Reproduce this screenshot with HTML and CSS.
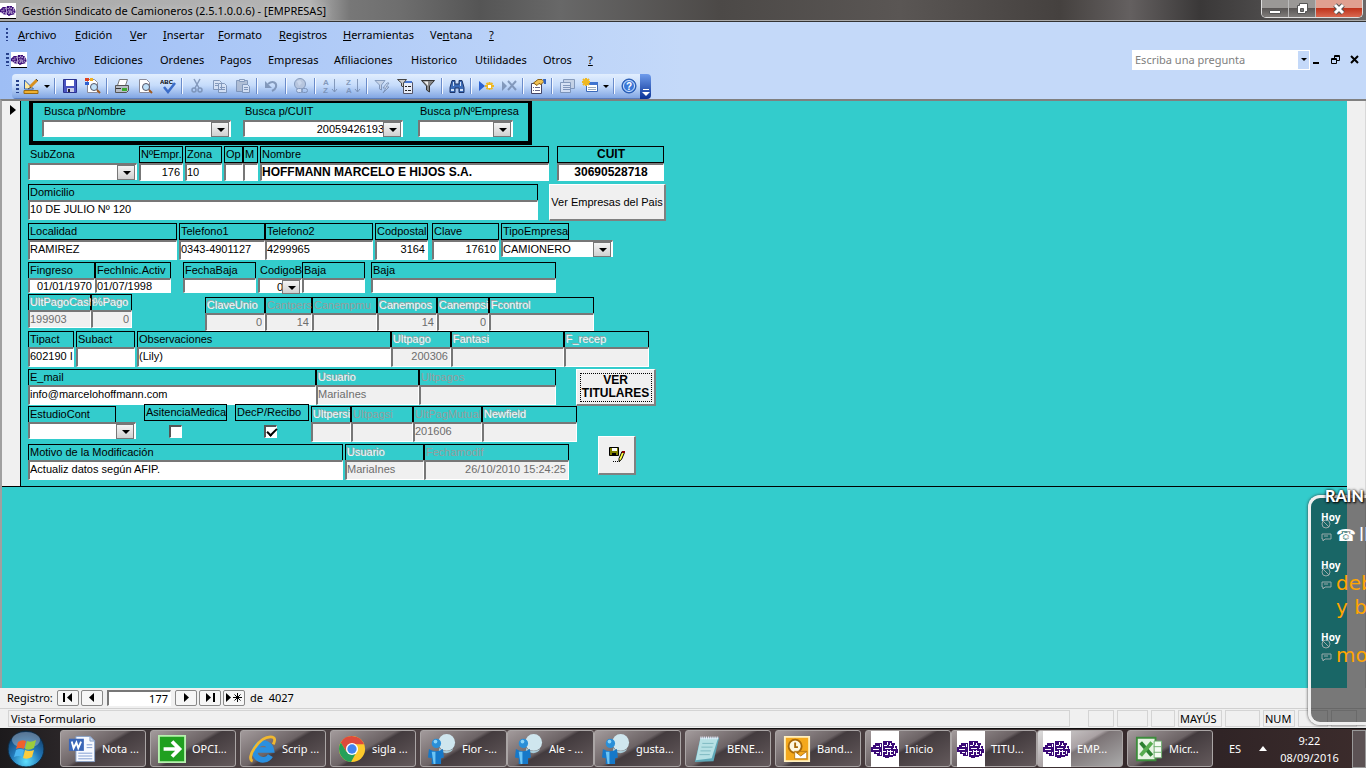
FILE: index.html
```html
<!DOCTYPE html>
<html lang="es">
<head>
<meta charset="utf-8">
<title>Gestión Sindicato de Camioneros</title>
<link rel="stylesheet" href="styles.css">
</head>
<body>
<svg class="defs" aria-hidden="true">
  <symbol id="truck" viewBox="0 0 28 22"><path fill="#3b0a78" d="M4 5h7v13H6v-2H3v-2H0V9h2V7h2zM12 3h9v2h3v3h2v3h1v4h-2v3h-3v1h-4v1h-4v-1h-2z"/><path stroke="#fff" fill="none" d="M5 8.500h3M2 11.500h6M5 14.500h3M9.500 6v3m0 5v3M13 7.500h3m2 0h3M14 10.500h6m2 0h3M12 13.500h3m2 0h5M14 16.500h3m2 0h3M16.500 4v3m0 5v4M19.500 5v2m0 5v4M23.500 7v3m0 3v3"/></symbol>
  <symbol id="person" viewBox="0 0 30 32"><circle cx="20" cy="9" r="9" fill="#cfe6ee"/><path fill="#a9ccd8" d="M12 15c4 4 10 4 15 1-2 4-8 6-12 3l-4 4z"/><circle cx="9" cy="10" r="5" fill="#2a8fd8"/><circle cx="8" cy="8" r="2" fill="#8cd4f8"/><path fill="#1678c8" d="M1 16q8 5 15 0l1 9-3 1v6H4v-6l-4-1z"/><path fill="#6cc4f4" d="M4 19h4v13H6z"/></symbol>
  <symbol id="sheetfind" viewBox="0 0 16 16"><path fill="#fff" stroke="#8a8a98" d="M2.500 1.500h7l3 3v10h-10z"/><circle cx="9" cy="9" r="3.500" fill="#bfe0f8" stroke="#556"/><path stroke="#a05a20" stroke-width="2" d="M12 12l3 3"/></symbol>
</svg>

<header class="titlebar">
  <svg class="app-icon"><use href="#truck"/></svg>
  <h1>Gestión Sindicato de Camioneros (2.5.1.0.0.6) - [EMPRESAS]</h1>
  <div class="win-buttons">
    <button aria-label="Minimizar"><svg width="14" height="12"><path fill="#fff" stroke="#555" d="M1.500 7.500h11v3h-11z"/></svg></button>
    <button aria-label="Restaurar"><svg width="14" height="14"><path fill="#fff" stroke="#555" d="M4.500 1.500h8v8h-2v2h-8v-8h2z"/><path fill="#777" stroke="#555" d="M5.500 6.500h3v3h-3z"/></svg></button>
    <button class="close" aria-label="Cerrar"><svg width="14" height="12"><path stroke="#555" stroke-width="5" d="M3 2l8 8M11 2L3 10"/><path stroke="#fff" stroke-width="3" d="M3 2l8 8M11 2L3 10"/></svg></button>
  </div>
</header>

<div class="bars">
  <nav class="menu menu-main">
    <i class="grip"></i>
    <a href="#"><u>A</u>rchivo</a><a href="#"><u>E</u>dición</a><a href="#"><u>V</u>er</a><a href="#"><u>I</u>nsertar</a><a href="#"><u>F</u>ormato</a><a href="#"><u>R</u>egistros</a><a href="#"><u>H</u>erramientas</a><a href="#">Ve<u>n</u>tana</a><a href="#"><u>?</u></a>
  </nav>
  <div class="menu-row">
    <nav class="menu menu-app">
      <i class="grip"></i>
      <svg class="app-icon"><use href="#truck"/></svg>
      <a href="#">Archivo</a><a href="#">Ediciones</a><a href="#">Ordenes</a><a href="#">Pagos</a><a href="#">Empresas</a><a href="#">Afiliaciones</a><a href="#">Historico</a><a href="#">Utilidades</a><a href="#">Otros</a><a href="#"><u>?</u></a>
    </nav>
    <div class="ask">
      <input type="text" placeholder="Escriba una pregunta" aria-label="Escriba una pregunta">
      <button aria-label="Preguntas anteriores"><i class="caret"></i></button>
    </div>
    <div class="doc-buttons">
      <button aria-label="Minimizar documento"><svg width="10" height="10"><path d="M1 7h6v2H1z"/></svg></button>
      <button aria-label="Restaurar documento"><svg width="10" height="10"><path fill="none" stroke="#000" d="M3.500 3V.500h5v5H6M.500 3.500h5v5h-5zM3 1.500h6M0 4.500h6"/></svg></button>
      <button aria-label="Cerrar documento"><svg width="10" height="10"><path stroke="#000" stroke-width="2" d="M1 1l7 7M8 1L1 8"/></svg></button>
    </div>
  </div>
  <div class="toolbar">
    <div class="tools">
      <i class="grip"></i>
      <button aria-label="Vista Diseño"><svg viewBox="0 0 16 16"><path fill="#ffe9a0" stroke="#2c5fb0" d="M1.500 2v9h9z"/><path fill="#f0b030" stroke="#9a6a10" d="M1 12.500h14v3H1z"/><path stroke="#d89020" stroke-width="3" d="M7 9l7-7"/><path stroke="#444" d="M5 11l3-2M13 1l2 2"/></svg></button>
      <button class="drop" aria-label="Más vistas"><i class="caret"></i></button>
      <i class="sep"></i>
      <button aria-label="Guardar"><svg viewBox="0 0 16 16"><path fill="#4a55c0" stroke="#2b3390" d="M1.500 1.500h13v13h-13z"/><path fill="#fff" d="M4 2h8v6H4z"/><path fill="#c8cce8" d="M5 10h7v4H5z"/><path fill="#223" d="M6 11h2v3H6z"/></svg></button>
      <button aria-label="Buscar archivo"><svg viewBox="0 0 16 16"><use href="#sheetfind"/><path fill="#e04020" d="M0 0h4v3H0z"/><path fill="#f0b020" d="M5 0h3v3H5z"/><path fill="#3060d0" d="M0 4h4v3H0z"/></svg></button>
      <i class="sep"></i>
      <button aria-label="Imprimir"><svg viewBox="0 0 16 16"><path fill="#fff" stroke="#777" d="M5.500 1.500h8l-2 6h-8z"/><path fill="#b8bcc4" stroke="#555" d="M1.500 7.500h13v5l-2 2h-11z"/><path fill="#3aaa30" d="M8 10h5v3H8z"/><path stroke="#333" d="M2 10.500h5"/></svg></button>
      <button aria-label="Vista preliminar"><svg viewBox="0 0 16 16"><use href="#sheetfind"/></svg></button>
      <button aria-label="Ortografía"><svg viewBox="0 0 16 16"><text x="0" y="6" class="abc">ABC</text><path fill="none" stroke="#3a6cc8" stroke-width="2.500" d="M4 9l4 5 7-9"/></svg></button>
      <i class="sep"></i>
      <button class="off" aria-label="Cortar"><svg viewBox="0 0 16 16"><path fill="none" stroke="#7389ad" stroke-width="1.500" d="M5 1l5 9M11 1L6 10"/><circle cx="5" cy="12" r="2" fill="none" stroke="#7389ad" stroke-width="1.500"/><circle cx="11" cy="12" r="2" fill="none" stroke="#7389ad" stroke-width="1.500"/></svg></button>
      <button class="off" aria-label="Copiar"><svg viewBox="0 0 16 16"><path fill="#dbe4f4" stroke="#7389ad" d="M1.500 2.500h6l2 2v7h-8zM6.500 5.500h6l2 2v7h-8zM3 5.500h3M3 7.500h3M8 9.500h5M8 11.500h5"/></svg></button>
      <button class="off" aria-label="Pegar"><svg viewBox="0 0 16 16"><path fill="#a9b6cc" stroke="#7389ad" d="M1.500 2.500h11v11h-11z"/><path fill="#dbe4f4" stroke="#7389ad" d="M4.500 1.500h5v2h-5zM7.500 6.500h5l2 2v6h-7zM9 9.500h4M9 11.500h4"/></svg></button>
      <i class="sep"></i>
      <button class="off" aria-label="Deshacer"><svg viewBox="0 0 16 16"><path fill="none" stroke="#7389ad" stroke-width="2" d="M4 6c5-4 9-1 8 3-.500 2-2 3-4 4"/><path fill="#7389ad" d="M1 3v7h7z"/></svg></button>
      <i class="sep"></i>
      <button class="off" aria-label="Hipervínculo"><svg viewBox="0 0 16 16"><circle cx="7" cy="6" r="5.500" fill="#b4c1d8" stroke="#7389ad"/><path fill="#c8d4e8" d="M4 3l3-1 2 3-3 3z"/><rect x="3.500" y="10.500" width="6" height="4" rx="2" fill="#dbe4f4" stroke="#7389ad"/><rect x="8.500" y="10.500" width="6" height="4" rx="2" fill="none" stroke="#7389ad"/></svg></button>
      <i class="sep"></i>
      <button class="off" aria-label="Orden ascendente"><svg viewBox="0 0 16 16"><text x="1" y="7" class="az">A</text><text x="1" y="15" class="az">Z</text><path fill="none" stroke="#7389ad" d="M12.500 1v13M10 11l2.500 3 2.500-3"/></svg></button>
      <button class="off" aria-label="Orden descendente"><svg viewBox="0 0 16 16"><text x="1" y="7" class="az">Z</text><text x="1" y="15" class="az">A</text><path fill="none" stroke="#7389ad" d="M12.500 1v13M10 11l2.500 3 2.500-3"/></svg></button>
      <i class="sep"></i>
      <button class="off" aria-label="Filtro por selección"><svg viewBox="0 0 16 16"><path fill="#c3cfe2" stroke="#7389ad" d="M1 2.500h10L7.500 7v5l-2-1V7z"/><path fill="#dbe4f4" stroke="#7389ad" d="M13 5l-4 5h3l-3 5 6-6h-3l3-4z"/></svg></button>
      <button aria-label="Filtro por formulario"><svg viewBox="0 0 16 16"><path fill="#e8edf8" stroke="#556" d="M6.500 4.500h9v11h-9z"/><path fill="#4a78d0" d="M7 3h8v2H7z"/><path fill="#ccc" stroke="#444" d="M.500 1.500h9L6.500 5v4l-2-1V5z"/><path stroke="#222" d="M8 8.500h2m1 0h3M8 12.500h2m1 0h3"/></svg></button>
      <button aria-label="Aplicar filtro"><svg viewBox="0 0 16 16"><path fill="#888" stroke="#333" d="M1.500 2.500h13L9.500 8v6l-3-2V8z"/><path fill="#eee" d="M4 3.500h4L8 8z"/></svg></button>
      <i class="sep"></i>
      <button aria-label="Buscar"><svg viewBox="0 0 16 16"><path fill="#3c6cb8" stroke="#1c3468" d="M3 2.500h3V6h4V2.500h3l2 7v5h-5V10H6v4.500H1v-5z"/><path fill="#cfe0f8" d="M2 11h3v2H2zM11 11h3v2h-3zM4 4h1v4H4zM11 4h1v4h-1z"/></svg></button>
      <i class="sep"></i>
      <button aria-label="Nuevo registro"><svg viewBox="0 0 16 16"><path fill="#2c62d0" d="M1 3l6 5-6 5z"/><path stroke="#f0b820" stroke-width="2" d="M7 8h9M11.500 4v8M8.500 5l6 6M14.500 5l-6 6"/><path fill="#fff" d="M10 7h3v3h-3z"/></svg></button>
      <button class="off" aria-label="Eliminar registro"><svg viewBox="0 0 16 16"><path fill="#7389ad" d="M1 3l5 5-5 5z"/><path stroke="#7389ad" stroke-width="2" d="M7 3l8 9M15 3l-8 9"/></svg></button>
      <i class="sep"></i>
      <button aria-label="Propiedades"><svg viewBox="0 0 16 16"><path fill="#fff" stroke="#446" d="M1.500 5.500h10v10h-10z"/><path stroke="#668" d="M3 9.500h1m1 0h5M3 12.500h1m1 0h5"/><path fill="#f0c050" stroke="#8a6010" d="M3.500 5L8 1.500h4l2 2-3 3-2-1-2 2z"/><path fill="#2f62c0" d="M13 1h3v5h-2z"/></svg></button>
      <i class="sep"></i>
      <button class="off" aria-label="Ventana Base de datos"><svg viewBox="0 0 16 16"><path fill="#c3cfe2" stroke="#7389ad" d="M4.500 1.500h11v9h-11z"/><path fill="#dbe4f4" stroke="#7389ad" d="M1.500 4.500h10v10h-10zM4 7.500h7M4 9.500h7M4 11.500h7"/></svg></button>
      <button aria-label="Nuevo objeto"><svg viewBox="0 0 16 16"><path fill="#fff" stroke="#3a68b8" d="M4.500 4.500h11v9h-11z"/><path fill="#3f74d0" d="M5 4h11v3H5z"/><path stroke="#9ab" d="M6 9.500h8M6 11.500h8"/><path stroke="#f0b820" stroke-width="2" d="M0 4h8M4 0v8M1 1l6 6M7 1L1 7"/></svg></button>
      <button class="drop" aria-label="Más objetos"><i class="caret"></i></button>
      <i class="sep"></i>
      <button aria-label="Ayuda"><svg viewBox="0 0 16 16"><circle cx="8" cy="8" r="7" fill="#3a78d8" stroke="#1d50a8"/><circle cx="8" cy="8" r="5.500" fill="none" stroke="#d8e8ff"/><text x="5" y="12" class="help">?</text></svg></button>
    </div>
    <button class="tools-end" aria-label="Opciones de barra"><svg width="8" height="8"><path d="M1 1.500h6" stroke="#fff"/><path fill="#fff" d="M0 4h8L4 8z"/></svg></button>
  </div>
</div>

<main class="workspace">
  <div class="detail">
    <div class="selector"><svg width="6" height="10"><path d="M0 0l6 5-6 5z"/></svg></div>
    <form class="record">
      <div class="search">
        <div class="s-nombre"><label for="bn">Busca p/Nombre</label><span class="combo"><select id="bn"><option></option></select></span></div>
        <div class="s-cuit"><label for="bc">Busca p/CUIT</label><span class="combo right"><select id="bc"><option>20059426193</option></select></span></div>
        <div class="s-emp"><label for="be">Busca p/NºEmpresa</label><span class="combo"><select id="be"><option></option></select></span></div>
      </div>

      <div class="row r-nombre boxed">
        <div class="g g2 plain"><label for="sz">SubZona</label><span class="combo"><select id="sz"><option></option></select></span></div>
        <div class="g g2 num"><label for="ne">NºEmpr.</label><input id="ne" value="176"></div>
        <div class="g g2"><label for="zo">Zona</label><input id="zo" value="10"></div>
        <div class="g"><label for="op">Op</label><input id="op"></div>
        <div class="g g2"><label for="mm">M</label><input id="mm"></div>
        <div class="g g8 strong"><label for="no">Nombre</label><input id="no" value="HOFFMANN MARCELO E HIJOS S.A."></div>
        <div class="g strong cuit"><label for="cu">CUIT</label><input id="cu" value="30690528718"></div>
      </div>

      <div class="row r-domicilio">
        <div class="g g11"><label for="do">Domicilio</label><input id="do" value="10 DE JULIO Nº 120"></div>
        <button type="button" class="push">Ver Empresas del Pais</button>
      </div>

      <div class="row r-localidad boxed">
        <div class="g g2"><label for="lo">Localidad</label><input id="lo" value="RAMIREZ"></div>
        <div class="g"><label for="t1">Telefono1</label><input id="t1" value="0343-4901127"></div>
        <div class="g g2"><label for="t2">Telefono2</label><input id="t2" value="4299965"></div>
        <div class="g g4 num"><label for="cp">Codpostal</label><input id="cp" value="3164"></div>
        <div class="g g2 num"><label for="cl">Clave</label><input id="cl" value="17610"></div>
        <div class="g tipo"><label for="te">TipoEmpresa</label><span class="combo"><select id="te"><option>CAMIONERO</option></select></span></div>
      </div>

      <div class="row r-fechas">
        <div class="g num"><label for="fi">Fingreso</label><input id="fi" value="01/01/1970"></div>
        <div class="g g12"><label for="fa">FechInic.Activ</label><input id="fa" value="01/07/1998"></div>
        <div class="g g2"><label for="fb">FechaBaja</label><input id="fb"></div>
        <div class="g plain"><label for="cb">CodigoB</label><span class="combo right"><select id="cb"><option>0</option></select></span></div>
        <div class="g g5"><label for="b1">Baja</label><input id="b1"></div>
        <div class="g"><label for="b2">Baja</label><input id="b2"></div>
      </div>

      <div class="row r-pagos">
        <div class="g dis"><label for="up">UltPagoCash</label><input id="up" value="199903" disabled></div>
        <div class="g g73 dis num"><label for="pp">%Pago</label><input id="pp" value="0" disabled></div>
        <div class="g dis num low"><label for="cn">ClaveUnio</label><input id="cn" value="0" disabled></div>
        <div class="g dis faint num low"><label for="ct">Cantpers</label><input id="ct" value="14" disabled></div>
        <div class="g dis faint low"><label for="cm">Canempmu</label><input id="cm" disabled></div>
        <div class="g dis num low"><label for="co">Canempos</label><input id="co" value="14" disabled></div>
        <div class="g dis num low"><label for="ci">Canempsi</label><input id="ci" value="0" disabled></div>
        <div class="g dis low"><label for="fc">Fcontrol</label><input id="fc" disabled></div>
      </div>

      <div class="row r-tipact">
        <div class="g g2"><label for="ta">Tipact</label><input id="ta" value="602190 I"></div>
        <div class="g g2"><label for="su">Subact</label><input id="su"></div>
        <div class="g"><label for="ob">Observaciones</label><input id="ob" value="(Lily)"></div>
        <div class="g dis num"><label for="ul">Ultpago</label><input id="ul" value="200306" disabled></div>
        <div class="g dis"><label for="fn">Fantasi</label><input id="fn" disabled></div>
        <div class="g dis"><label for="fr">F_recep</label><input id="fr" disabled></div>
      </div>

      <div class="row r-email">
        <div class="g"><label for="em">E_mail</label><input id="em" value="info@marcelohoffmann.com"></div>
        <div class="g dis"><label for="us">Usuario</label><input id="us" value="MariaInes" disabled></div>
        <div class="g g20 dis faint"><label for="ug">Ultpagos</label><input id="ug" disabled></div>
        <button type="button" class="push focus">VER TITULARES</button>
      </div>

      <div class="row r-estudio">
        <div class="g g8"><label class="short" for="es">EstudioCont</label><span class="combo"><select id="es"><option></option></select></span></div>
        <div class="g g8 check asist"><label for="am">AsitenciaMedica</label><input id="am" type="checkbox"></div>
        <div class="g g2 check"><label for="dr">DecP/Recibo</label><input id="dr" type="checkbox" checked></div>
        <div class="g dis"><label for="ui">Ultpersi</label><input id="ui" disabled></div>
        <div class="g dis faint"><label for="uu">Ultpagsi</label><input id="uu" disabled></div>
        <div class="g dis faint"><label for="um">UltPagMutual</label><input id="um" value="201606" disabled></div>
        <div class="g dis"><label for="nf">Newfield</label><input id="nf" disabled></div>
      </div>

      <div class="row r-motivo">
        <div class="g g2"><label for="mo">Motivo de la Modificación</label><input id="mo" value="Actualiz datos según AFIP."></div>
        <div class="g dis"><label for="u2">Usuario</label><input id="u2" value="MariaInes" disabled></div>
        <div class="g g29 dis faint num"><label for="fm">Fechamodif</label><input id="fm" value="26/10/2010 15:24:25" disabled></div>
        <button type="button" class="push save" aria-label="Guardar registro"><svg width="16" height="16"><path stroke="#000" fill="#808000" d="M.500.500h9v8h-9z"/><path fill="#fff" d="M3 1h5v3H3z"/><path d="M3 6h4v3H3zM4 14h1v1H4zM6 14h1v1H6zM8 14h1v1H8zM10 14h1v1h-1z"/><path stroke="#000" fill="#ffff40" d="M13 4.500l2.500 1-3 7-2.500 2v-3z"/><path fill="#800" d="M13 4h3v2h-3z"/></svg></button>
      </div>
    </form>
  </div>
  <div class="scroll"></div>
</main>

<footer class="recnav">
  <span>Registro:</span>
  <button aria-label="Primero"><svg width="12" height="10"><path d="M1 0h2v9H1zM10 0v9L5 4.500z"/></svg></button>
  <button aria-label="Anterior"><svg width="12" height="10"><path d="M8 0v9L3 4.500z"/></svg></button>
  <input value="177" aria-label="Número de registro">
  <button aria-label="Siguiente"><svg width="12" height="10"><path d="M4 0v9l5-4.500z"/></svg></button>
  <button aria-label="Último"><svg width="12" height="10"><path d="M2 0v9l5-4.500zM9 0h2v9H9z"/></svg></button>
  <button aria-label="Nuevo"><svg width="18" height="10"><path d="M1 0v9l5-4.500z"/><path stroke="#000" d="M12.500 0v9M8 4.500h9M9.500 1.500l6 6M15.500 1.500l-6 6"/></svg></button>
  <span class="total">de&nbsp; 4027</span>
</footer>
<div class="status">
  <span class="view">Vista Formulario</span><span></span><span></span><span></span><span>MAYÚS</span><span></span><span>NUM</span><span></span><span></span>
</div>

<div class="taskbar">
  <button class="start" aria-label="Inicio de Windows"><svg width="38" height="38" viewBox="0 0 38 38"><defs><radialGradient id="orb" cx=".5" cy=".85" r=".8"><stop offset="0" stop-color="#5fe0ff"/><stop offset=".5" stop-color="#2278b8"/><stop offset="1" stop-color="#123c68"/></radialGradient></defs><circle cx="19" cy="19" r="18" fill="url(#orb)" stroke="#10283c"/><ellipse cx="19" cy="10" rx="14" ry="8" fill="#fff" opacity=".3"/><path fill="#f0602c" d="M11 12q4-3 8-1l-2 8q-4-2-8 0z"/><path fill="#9ccc3c" d="M20 11q4 2 9-1l-2 8q-5 3-9 1z"/><path fill="#4ab4f0" d="M9 20q4-2 8 0l-2 7q-3-2-8 0z"/><path fill="#fccc3c" d="M18 20q4 2 9 0l-2 7q-5 3-9 1z"/></svg></button>
  <button class="task"><svg viewBox="0 0 30 30"><path fill="#f6f9ff" stroke="#86a0c8" d="M8.500 1.500h15l5 5v22h-20z"/><path fill="#cddcf4" stroke="#86a0c8" d="M23.500 1.500v5h5z"/><path stroke="#7d9ad0" d="M11 19.500h15M11 22.500h15M11 25.500h15M20 10.500h6M20 13.500h6"/><path fill="#3a66b8" d="M1 4h16v13H1z"/><path fill="none" stroke="#fff" stroke-width="2" d="M4 7l2 7 3-6 2 6 3-7"/></svg><span>Nota ...</span></button>
  <button class="task"><svg viewBox="0 0 30 30"><path fill="#20a020" stroke="#b8f0b0" stroke-width="2" d="M1 1h28v28H1z"/><path fill="none" stroke="#fff" stroke-width="4" d="M6 15h17M15 7l8 8-8 8"/></svg><span>OPCI...</span></button>
  <button class="task"><svg viewBox="0 0 30 30"><path fill="none" stroke="#2a90e0" stroke-width="6" d="M24 22a9 9 0 1 1 1-6H9"/><path fill="none" stroke="#f0b830" stroke-width="3" d="M5 28C-3 25 12 2 24 2c6 0 5 4 3 8"/></svg><span>Scrip ...</span></button>
  <button class="task"><svg viewBox="0 0 30 30"><circle cx="15" cy="15" r="14" fill="#fcc92c"/><path fill="#dd4a3c" d="M3 8a14 14 0 0 1 25 2H15L9 18z"/><path fill="#26a05a" d="M3 8A14 14 0 0 0 14 29l6-11H9z"/><circle cx="15" cy="15" r="6.500" fill="#fff"/><circle cx="15" cy="15" r="5" fill="#4284f0"/></svg><span>sigla ...</span></button>
  <div class="stack">
    <button class="task"><svg><use href="#person"/></svg><span>Flor -...</span></button>
    <button class="task"><svg><use href="#person"/></svg><span>Ale - ...</span></button>
    <button class="task"><svg><use href="#person"/></svg><span>gusta...</span></button>
  </div>
  <button class="task"><svg viewBox="0 0 30 30"><path fill="#5ea8b8" d="M8 3h20l-6 25-20 1z"/><path fill="#b6e0e4" d="M8 3h19l-7 22-17 2z"/><path stroke="#eef" stroke-width="3" stroke-dasharray="1 1" d="M8 3h20"/><path stroke="#7cb8c0" d="M10 9h12M9 13h12M8 17h11M7 21h11"/></svg><span>BENE...</span></button>
  <button class="task"><svg viewBox="0 0 30 30"><path fill="#f4a81c" stroke="#fff0c0" stroke-width="2" d="M2 2h26v26H2z"/><circle cx="13" cy="12" r="7" fill="#fff8e0" stroke="#a86808" stroke-width="2"/><path fill="none" stroke="#a86808" stroke-width="2" d="M13 8v5h3"/><path fill="#fff" stroke="#b87810" d="M12.500 17.500h13v8h-13l0-8 6.500 5 6.500-5"/></svg><span>Band...</span></button>
  <div class="stack apps">
    <button class="task"><svg class="white"><use href="#truck"/></svg><span>Inicio</span></button>
    <button class="task"><svg class="white"><use href="#truck"/></svg><span>TITU...</span></button>
    <button class="task active"><svg class="white"><use href="#truck"/></svg><span>EMP...</span></button>
  </div>
  <button class="task"><svg viewBox="0 0 30 30"><path fill="#e8f4e4" stroke="#3c8c3c" stroke-width="2" d="M2 3h20v24H2z"/><path fill="#f4fbf2" stroke="#6cae6c" d="M20.500 6.500h8v18h-8zM20 12.500h8M20 18.500h8"/><path stroke="#2c8030" stroke-width="4" d="M6 8l12 14"/><path stroke="#58ac50" stroke-width="4" d="M18 8L6 22"/></svg><span>Micr...</span></button>
  <div class="tray">
    <span>ES</span>
    <svg width="8" height="5"><path fill="#fff" d="M4 0l4 5H0z"/></svg>
    <time>9:22<br>08/09/2016</time>
    <button class="peek" aria-label="Mostrar escritorio"></button>
  </div>
</div>

<aside class="notes">
  <h2>RAIN</h2>
  <article><b>Hoy</b><div class="marks"><svg width="11" height="24"><circle cx="5" cy="5" r="4"/><path d="M2 2l6 6M1 15h9v5H4l-2 2v-2H1zM3 17h4"/></svg></div><p class="call"><i>☎&#xFE0E;</i>lla</p></article>
  <article class="two"><b>Hoy</b><div class="marks"><svg width="11" height="24"><circle cx="5" cy="5" r="4"/><path d="M2 2l6 6M1 15h9v5H4l-2 2v-2H1zM3 17h4"/></svg></div><p>deb<br>y b</p></article>
  <article><b>Hoy</b><div class="marks"><svg width="11" height="24"><circle cx="5" cy="5" r="4"/><path d="M2 2l6 6M1 15h9v5H4l-2 2v-2H1zM3 17h4"/></svg></div><p>mod</p></article>
</aside>
</body>
</html>
```

FILE: styles.css
```css
* { box-sizing: border-box; }
body {
  margin: 0;
  height: 100vh;
  display: flex;
  flex-direction: column;
  overflow: hidden;
  position: relative;
  background: #f0f0f0;
  color: #000;
  font: 11px/14px "Noto Sans", sans-serif;
}
button, input, select { font: inherit; color: inherit; padding: 0; border: 0; border-radius: 0; margin: 0; min-width: 0; }
button { background: none; display: flex; align-items: center; justify-content: center; }
a { color: inherit; text-decoration: none; }
.defs { display: none; }
.app-icon { width: 16px; height: 16px; background: #fff; border-bottom: 1px solid #000; flex: none; }

/* Title bar */
.titlebar {
  flex: none;
  height: 22px;
  display: flex;
  align-items: center;
  gap: 6px;
  border-bottom: 1px solid #333;
  box-shadow: inset 0 -1px #aaa;
  background: linear-gradient(90deg, #aaa 0, #b4b4b4 310px, #777 350px, #6e6e6e 400px, #555 480px, #686868 560px, #4c4947 720px, #5a5654 900px, #45413f 1060px, #646060 1130px, #3a3838 1200px, #6a6868);
}
.titlebar h1 { flex: 1; margin: 0; font-size: 11px; font-weight: 400; text-shadow: 0 0 6px #ddd; }
.win-buttons { display: flex; align-self: flex-start; margin-right: 3px; border: 1px solid #ddd; border-top: 0; border-radius: 0 0 5px 5px; overflow: hidden; }
.win-buttons button { width: 27px; height: 17px; border-right: 1px solid #bbb; background: linear-gradient(#9a9896 45%, #5a5756 50%, #807c7a); }
.win-buttons .close { width: 46px; border: 0; background: linear-gradient(#e0a090 45%, #c0341c 50%, #d86850); }

/* Menus */
.bars { flex: none; height: 77px; background: linear-gradient(90deg, #9ebef5, #c4d9f9 50%); display: flex; flex-direction: column; }
.menu { display: grid; align-items: center; height: 25px; }
.menu a { white-space: nowrap; font-size: 11px; }
.menu-main { padding-left: 6px; grid-template-columns: 12px 57px 55px 33px 55px 61px 64px 87px 59px 20px; }
.menu-app { flex: 1; padding-left: 6px; grid-template-columns: 5px 26px 57px 66px 60px 48px 66px 77px 64px 68px 45px 20px; }
.menu-row { display: flex; align-items: center; padding-right: 6px; }
.grip { width: 3px; height: 13px; background: repeating-linear-gradient(#27418c 0 2px, transparent 2px 4px); justify-self: start; }
.menu-main .grip { width: 2px; }
.ask { display: flex; width: 178px; height: 20px; background: #fff; padding: 1px; }
.ask input { flex: 1; padding-left: 2px; outline: 0; }
.ask input::placeholder { color: #808080; opacity: 1; }
.ask button { width: 11px; background: #c4d9f9; }
.caret { width: 0; border: 3px solid transparent; border-top-color: #000; border-bottom: 0; }
.doc-buttons { display: flex; gap: 8px; padding-left: 1px; }
.doc-buttons button { width: 11px; height: 12px; }

/* Toolbar */
.toolbar { display: flex; height: 25px; padding-left: 12px; margin-top: auto; }
.tools { display: flex; align-items: center; padding: 0 0 1px 4px; border-radius: 4px 0 0 4px; background: linear-gradient(#e2eefe, #c6dcfb 45%, #84a8e4 94%, #4668ac); }
.tools button { width: 23px; height: 22px; }
.tools .drop { width: 10px; }
.tools svg { width: 16px; height: 16px; }
.tools .off { opacity: .8; }
.sep { width: 6px; height: 16px; border-left: 1px solid #6a8ccb; box-shadow: inset 1px 0 #f4f8ff; margin-left: 2px; margin-right: -2px; }
.tools-end { width: 11px; align-items: flex-end; padding-bottom: 3px; border-radius: 0 4px 4px 0; background: linear-gradient(#6f9cec, #0a3296); }
.abc { font: bold 6px "Liberation Sans", sans-serif; }
.az { font: bold 8px "Liberation Sans", sans-serif; fill: #7389ad; }
.help { font: bold 10px "Liberation Sans", sans-serif; fill: #fff; }

/* Record form */
.workspace { flex: 1; display: flex; min-height: 0; border-left: 2px solid #a0a0a0; border-top: 2px solid #808080; background: #33cccc; font: 11px/14px "Liberation Sans", sans-serif; }
.detail { flex: 1; min-width: 0; align-self: flex-start; display: flex; border-bottom: 1px solid #000; }
.selector { width: 19px; border-right: 1px solid #000; background: #f0f0f0; padding: 3px 0 0 8px; }
.scroll { width: 19px; background: #f0f0f0; border-right: 1px solid #d8d8d8; }
.record {
  flex: 1;
  padding-left: 7px;
  display: grid;
  grid-template-rows: 45px 38px 39px 39px 32px 37px 38px 37px 38px 42px;
}
.record label { display: block; white-space: nowrap; }
.record input, .record select { display: block; width: 100%; background: #fff; outline: 0; }
.search { display: flex; width: 503px; height: 44px; margin-left: 1px; border: 4px solid #000; border-top-width: 2px; padding: 0 0 0 9px; }
.search label { padding-left: 2px; height: 17px; line-height: 17px; }
.s-nombre { width: 201px; padding-right: 12px; }
.s-cuit { width: 175px; padding-right: 15px; }
.s-emp { width: 95px; }
.s-emp label { margin-right: -20px; }

.row { display: grid; align-items: start; }
.g { min-width: 0; }
.g2 { margin-right: 2px; }
.g4 { margin-right: 4px; }
.g5 { margin-right: 6px; }
.g8 { margin-right: 8px; }
.g11 { margin-right: 11px; }
.g12 { margin-right: 12px; }
.g20 { margin-right: 20px; }
.g29 { margin-right: 29px; }
.g73 { margin-right: 73px; }
.g > label { height: 16px; line-height: 15px; padding-left: 1px; border: 1px solid #000; border-bottom: 0; }
.boxed .g > label { height: 17px; border-bottom: 1px solid #000; }
.g > input:not([type=checkbox]) { height: 20px; padding: 0 0 4px; border: solid; border-width: 2px 1px 1px 2px; border-color: #777 #fff #fff #777; }
.num > input:not([type=checkbox]) { text-align: right; padding-right: 2px; }
.g > input:disabled { background: #f0f0f0; color: #6d6d6d; }
.plain > label { border-color: transparent !important; }
.dis > label { color: #f6f6f6; text-shadow: -1px -1px #aaa0a0; }
.faint > label { color: #979c9c; text-shadow: none; }
.strong > input { font-weight: 700; font-size: 12px; }
.cuit > label { font-weight: 700; font-size: 12px; text-align: center; }
.cuit > input { text-align: center; }

.combo { display: block; position: relative; height: 17px; }
.combo select { height: 17px; appearance: none; padding: 0 18px 0 0; border: solid; border-width: 2px 1px 1px 2px; border-color: #777 #fff #fff #777; }
.combo.right select { text-align-last: right; }
.combo::before { content: ""; position: absolute; right: 2px; top: 2px; width: 16px; height: 13px; border: 1px solid #777; background: linear-gradient(#f4f4f4, #d0d0d0); }
.combo::after { content: ""; position: absolute; right: 6px; top: 8px; border: 4px solid transparent; border-top-color: #000; border-bottom: 0; }

.r-nombre { grid-template-columns: 111px 46px 39px 19px 17px 297px 107px; }
.r-nombre .g > input:not([type=checkbox]) { height: 18px; padding-bottom: 1px; }
.r-domicilio { grid-template-columns: 521px 117px; }
.r-localidad { grid-template-columns: 151px 86px 110px 57px 69px 112px; }
.tipo > label { width: 68px; }
.r-fechas { grid-template-columns: 67px 88px 75px 44px 69px 185px; }
.r-fechas .g > input:not([type=checkbox]) { height: 15px; padding-bottom: 0; }
.r-fechas .combo, .r-fechas .combo select { height: 15px; }
.r-fechas .combo::before { height: 12px; }
.r-pagos { grid-template-columns: 63px 114px 60px 47px 65px 60px 52px 105px; }
.r-pagos .g > input:not([type=checkbox]) { height: 18px; padding-bottom: 2px; }
.r-pagos .low { margin-top: 3px; }
.r-tipact { grid-template-columns: 48px 61px 254px 60px 113px 85px; }
.r-email { grid-template-columns: 288px 103px 157px 80px; }
.r-estudio { grid-template-columns: 116px 91px 76px 40px 62px 69px 95px; }
.r-motivo { grid-template-columns: 317px 79px 174px 38px; }
.short { width: 88px; }
.check { display: flex; flex-direction: column; align-items: center; margin-top: -2px; }
.check > label { align-self: stretch; height: 17px; border-bottom: 1px solid #000; }
.record .check > input { appearance: none; width: 13px; height: 13px; margin: 4px 4px 0 0; border: solid; border-width: 2px 1px 1px 2px; border-color: #555 #fff #fff #555; }
.record .asist > input { margin-right: 20px; }
.check > input:checked::after { content: ""; display: block; width: 8px; height: 4px; margin: 1px; border: solid #000; border-width: 0 0 2px 2px; transform: rotate(-45deg); }
.push { height: 37px; background: #f0f0f0; border: solid; border-width: 1px 2px 2px 1px; border-color: #fff #808080 #808080 #fff; outline: 0; white-space: nowrap; }
.focus { font-weight: 700; font-size: 12px; line-height: 13px; white-space: normal; outline: 1px dotted #000; outline-offset: -5px; }
.save { height: 39px; margin-top: -8px; }

/* Record navigator and status */
.recnav { flex: none; height: 21px; display: flex; align-items: center; padding-left: 7px; border-bottom: 1px solid #d0d0d0; }
.recnav > span { width: 50px; }
.recnav button { width: 22px; height: 16px; margin-right: 2px; border: 1px solid #888; border-radius: 2px; background: #f6f6f6; }
.recnav input { width: 64px; height: 16px; margin: 0 4px 0 2px; padding-right: 2px; text-align: right; background: #fff; border: solid; border-width: 2px 1px 1px 2px; border-color: #777 #fff #fff #777; }
.recnav .total { padding-left: 3px; width: 80px; }
.status { flex: none; height: 19px; display: grid; grid-template-columns: 1fr 26px 31px 24px 44px 35px 32px 30px 26px; column-gap: 3px; padding: 1px 9px 1px 8px; }
.status span { border: 1px solid #d4d4d4; padding-left: 1px; line-height: 15px; }
.status .view { margin-right: 15px; padding-left: 2px; }

/* Taskbar */
.taskbar { flex: none; height: 40px; display: flex; gap: 4px; padding: 1px 0; color: #fff; border-top: 1px solid #111; background: linear-gradient(90deg, #1c1a1c, #4a4042 200px, #54484a 50%, #302426 1220px, #3c2c2c); }
.start { width: 52px; margin-right: 4px; }
.task { flex: none; width: 86px; padding-left: 7px; gap: 6px; justify-content: flex-start; border: 1px solid #aaa5a5; border-radius: 3px; background: linear-gradient(150deg, #a39b9c 0, #6c6365 45%, #433b3e 50%, #645a5c); white-space: nowrap; }
.task svg { width: 28px; height: 30px; flex: none; }
.task .white { background: #fff; height: 36px; }
.stack { display: flex; }
.stack .task { width: 87px; padding-left: 7px; }
.apps .task { width: 86px; padding-left: 5px; }
.task.active { background: linear-gradient(150deg, #ddd, #aaa2a4 45%, #7c7476 50%, #aaa); }
.tray { flex: 1; display: flex; align-items: center; padding-left: 12px; }
.tray span { width: 30px; }
.tray time { flex: 1; text-align: center; line-height: 17px; }
.peek { width: 14px; height: 38px; border: 1px solid #999; background: #5c5254; }

/* Desktop notes panel, floating over the window */
.notes { position: absolute; right: 0; top: 495px; width: 58px; height: 230px; padding: 0 0 0 10px; color: #fff; background: rgba(0, 0, 0, .5); border: 3px solid #f0f0f0; border-right: 0; border-radius: 12px 0 0 12px; box-shadow: 0 0 3px #333; white-space: nowrap; }
.notes h2 { margin: -12px 0 5px 4px; font: 900 16px/20px Lato, sans-serif; text-shadow: 1px 1px 2px #000, 0 0 3px #000; }
.notes article { display: grid; grid-template-columns: 15px 1fr; grid-template-rows: 12px 1fr; height: 48px; }
.notes .two { height: 72px; }
.notes b { grid-column: 1 / 3; font-size: 10px; line-height: 12px; }
.marks { margin-top: -4px; }
.marks svg { fill: none; stroke: #9aa; display: block; }
.notes p { margin: 0; font: 20px/24px "DejaVu Sans", sans-serif; color: #ffa500; }
.notes .call { color: #fff; font-size: 18px; }
.call i { font-size: 16px; font-style: normal; margin-right: 3px; }
```
